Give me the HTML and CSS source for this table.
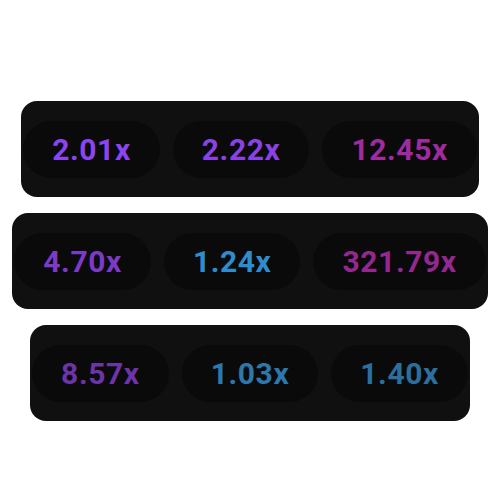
FILE: index.html
```html
<!DOCTYPE html>
<html>
<head>
<meta charset="utf-8">
<link rel="stylesheet" href="styles.css">
</head>
<body>
<main class="stack">
  <div class="panel">
    <span class="pill c-violet">2.01x</span>
    <span class="pill c-violet2">2.22x</span>
    <span class="pill c-magenta">12.45x</span>
  </div>
  <div class="panel">
    <span class="pill c-purple">4.70x</span>
    <span class="pill c-blue">1.24x</span>
    <span class="pill c-magenta2">321.79x</span>
  </div>
  <div class="panel">
    <span class="pill c-purple2">8.57x</span>
    <span class="pill c-blue2">1.03x</span>
    <span class="pill c-blue3">1.40x</span>
  </div>
</main>
</body>
</html>
```
FILE: styles.css
```css
html, body {
  margin: 0;
  background: #ffffff;
}
.stack {
  display: flex;
  flex-direction: column;
  align-items: center;
  gap: 16px;
  padding-top: 101px;
}
.panel {
  display: flex;
  align-items: center;
  gap: 13px;
  height: 96px;
  padding: 0 2px;
  box-sizing: border-box;
  background: #101010;
  border-radius: 16px;
}
.pill {
  display: flex;
  align-items: center;
  justify-content: center;
  height: 57px;
  padding: 0 29px;
  background: #0a0a0a;
  border-radius: 29px;
  font-family: Roboto, "Liberation Sans", sans-serif;
  font-weight: 700;
  font-size: 30px;
  letter-spacing: 0.6px;
}
.c-violet { color: #8b44f2; }
.c-violet2 { color: #8a42e6; }
.c-magenta { color: #a02aa2; }
.c-purple { color: #7c3ac8; }
.c-blue { color: #2f8dcf; }
.c-magenta2 { color: #952890; }
.c-purple2 { color: #6c34a8; }
.c-blue2 { color: #2c78ac; }
.c-blue3 { color: #2b6f9f; }
```
